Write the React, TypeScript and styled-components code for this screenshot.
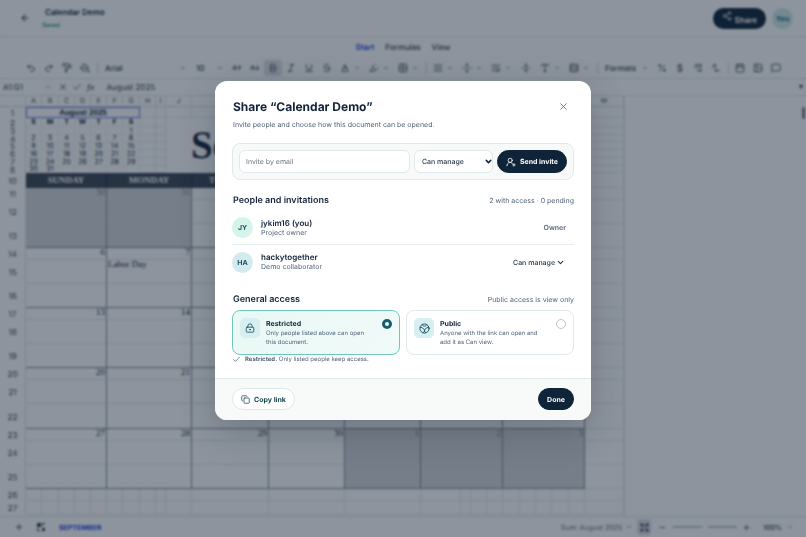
import React, { useState } from "react";
import styled, { createGlobalStyle, css } from "styled-components";
import {
  AArrowDown, AArrowUp, AlignJustify, ArrowLeft, Baseline, Bold, Calendar, Check, ChevronDown, Copy,
  DollarSign, Expand, Grid2x2, Image, Italic, LockKeyhole, MessageSquare, Minus, PaintBucket, PaintRoller,
  Percent, Plus, Redo2, Rows3, Share2, Strikethrough, Type, Underline, Undo2, UserRoundPlus, X,
  FoldVertical, WrapText, UnfoldVertical, DecimalsArrowLeft, DecimalsArrowRight, Highlighter,
} from "lucide-react";

const GlobalStyle = createGlobalStyle`
  * { box-sizing: border-box; }
  body {
    margin: 0;
    font-family: Inter, "Liberation Sans", sans-serif;
    text-rendering: geometricPrecision;
    color: #13243a;
    background: #fff;
  }
  button, input, select { font-family: inherit; color: inherit; margin: 0; text-rendering: inherit; }
  h1, h2, h3, p { margin: 0; }
`;

const Page = styled.div`
  height: 100vh;
  display: flex;
  flex-direction: column;
  overflow: hidden;
`;

/* ---------- Editor ---------- */

const TopBar = styled.header`
  display: flex;
  align-items: center;
  height: 37px;
  flex: none;
  padding: 0 13px 0 18px;
  border-bottom: 1px solid #e3e7ec;
`;
const PlainButton = styled.button<{ $w?: number; $active?: boolean }>`
  display: inline-flex;
  align-items: center;
  justify-content: center;
  flex: none;
  width: ${(p) => p.$w ?? 18}px;
  height: 16px;
  padding: 0;
  border: 0;
  border-radius: 3px;
  background: ${(p) => (p.$active ? "#dcdfe4" : "transparent")};
  color: #333b47;
`;
const DocInfo = styled.div`
  flex: 1;
  margin-left: 10px;
`;
const DocTitle = styled.h1`
  padding-top: 2px;
  padding-left: 3px;
  font-size: 8px;
  line-height: 14px;
  font-weight: 600;
`;
const Saved = styled.p`
  font-size: 6px;
  line-height: 14px;
  font-weight: 500;
  color: #0d8a80;
`;
const ShareButton = styled.button`
  display: flex;
  align-items: center;
  gap: 3px;
  height: 21px;
  padding: 0 9px;
  border: 0;
  border-radius: 11px;
  background: #0f2438;
  color: #fff;
  font-size: 8px;
  font-weight: 600;
  & > svg { margin-bottom: 4px; }
  & > span { margin-top: 4px; }
`;
const YouBadge = styled.span`
  display: grid;
  place-items: center;
  width: 21px;
  height: 21px;
  margin-left: 6px;
  border-radius: 50%;
  background: #cdebec;
  color: #17646c;
  font-size: 7px;
  font-weight: 700;
`;
const Tabs = styled.nav`
  display: flex;
  justify-content: center;
  gap: 11px;
  flex: none;
  height: 20px;
  font-size: 8px;
  line-height: 20px;
`;
const Tab = styled.a<{ $on?: boolean }>`
  text-decoration: none;
  font-weight: ${(p) => (p.$on ? 600 : 500)};
  color: ${(p) => (p.$on ? "#2447ea" : "#333b47")};
`;
const Toolbar = styled.div`
  display: flex;
  align-items: center;
  flex: none;
  height: 22px;
  padding-left: 22px;
  border-bottom: 1px solid #dfe3e8;
`;
const Caret = styled(ChevronDown)`
  flex: none;
  width: 6px;
  height: 6px;
  margin-right: 5px;
  stroke-width: 3;
  color: #555d69;
`;
const Divider = styled.span`
  flex: none;
  width: 1px;
  height: 12px;
  margin: 0 2px 0 3px;
  background: #d5d9df;
`;
const ToolSelect = styled.button<{ $w: number }>`
  display: flex;
  align-items: center;
  justify-content: space-between;
  flex: none;
  width: ${(p) => p.$w}px;
  height: 16px;
  padding: 0 0 0 5px;
  border: 0;
  background: transparent;
  font-size: 8px;
  font-weight: 500;
  color: #333b47;
`;
const FormulaBar = styled.div`
  display: flex;
  align-items: center;
  flex: none;
  height: 17px;
  padding: 0 3px;
  border-bottom: 1px solid #dfe3e8;
  font-size: 8px;
  color: #333b47;
`;
const CellName = styled.span`
  width: 42px;
`;
const Fx = styled.span`
  margin: 0 12px 0 3px;
  font-style: italic;
`;
const FormulaInput = styled.input`
  flex: 1;
  min-width: 0;
  padding: 0;
  border: 0;
  background: transparent;
  font-size: 8px;
`;
const Triangle = styled.span`
  border: 2px solid transparent;
  border-top: 4px solid #333b47;
  border-bottom: 0;
`;
const SheetArea = styled.main`
  flex: 1;
  min-height: 0;
  display: flex;
  overflow: hidden;
`;
const Filler = styled.div`
  flex: 1;
  display: flex;
  justify-content: flex-end;
  padding: 11px 1px;
  border-left: 1px solid #e3e6ea;
`;
const ScrollThumb = styled.span`
  width: 3px;
  height: 12px;
  border-radius: 2px;
  background: #7b828d;
`;
const Sheet = styled.table`
  flex: none;
  width: 624px;
  height: max-content;
  table-layout: fixed;
  border-collapse: separate;
  border-spacing: 0;
  font-size: 7px;
  line-height: 6px;
`;
const Row = styled.tr<{ $h: number }>`
  height: ${(p) => p.$h}px;
`;
const RowHead = styled.th`
  padding: 0;
  border-right: 1px solid #dfe3e8;
  font-size: 8px;
  font-weight: 400;
  color: #333b47;
`;
const ColHead = styled.th`
  padding: 0;
  border-right: 1px solid #dfe3e8;
  border-bottom: 1px solid #d5d9df;
  font-weight: 400;
  color: #444c58;
`;
const Cell = styled.td<{ $bold?: boolean }>`
  padding: 0;
  border-right: 1px solid #e3e6ea;
  border-bottom: 1px solid #e3e6ea;
  text-align: center;
  font-weight: ${(p) => (p.$bold ? 700 : 400)};
`;
const MiniCell = styled(Cell)`
  border-color: #f3f4f6;
`;
const SelectedCell = styled.td`
  padding: 0;
  border: 1px solid #5f79e6;
  text-align: center;
  font-family: "Liberation Sans", sans-serif;
  font-size: 8px;
  font-weight: 700;
`;
const MonthCell = styled.td`
  padding: 0 0 0 25px;
  text-align: left;
  vertical-align: middle;
  font-family: "Liberation Serif", serif;
  font-size: 39px;
  line-height: 39px;
  font-weight: 700;
  white-space: nowrap;
`;
const DayName = styled.th`
  padding: 0;
  border-right: 1px solid #263243;
  background: #3a4553;
  color: #fff;
  font-family: "Liberation Serif", serif;
  font-size: 9px;
  line-height: 9px;
  font-weight: 700;
`;
const DayCell = styled.td<{ $muted?: boolean; $last?: boolean; $note?: boolean }>`
  padding: 0 1px;
  border-right: 1px solid #7b828b;
  border-bottom: 1px solid ${(p) => (p.$last ? "#7b828b" : "#dfe3e8")};
  text-align: ${(p) => (p.$note ? "left" : "right")};
  vertical-align: top;
  font-family: "Liberation Serif", serif;
  font-size: 9px;
  line-height: 9px;
  ${(p) => p.$muted && css`
    background: #d2d5d9;
    color: #757b84;
    border-bottom-color: ${p.$last ? "#7b828b" : "#d2d5d9"};
  `}
`;
const BottomBar = styled.footer`
  display: flex;
  align-items: center;
  flex: none;
  height: 21px;
  padding: 0 13px 0 10px;
  border-top: 1px solid #dfe3e8;
  font-size: 7px;
  color: #333b47;
`;
const SheetTab = styled.a`
  flex: 1;
  margin-left: 5px;
  color: #2447ea;
  font-weight: 700;
  text-decoration: none;
`;
const SumLabel = styled.span`
  margin-right: 4px;
  color: #666e7a;
`;
const Zoom = styled.input`
  width: 64px;
  height: 8px;
  appearance: none;
  background: linear-gradient(#c3c8cf, #c3c8cf) center / 100% 2px no-repeat;
  &::-webkit-slider-thumb {
    appearance: none;
    width: 6px;
    height: 6px;
    border-radius: 50%;
    background: #fff;
  }
`;
const ZoomValue = styled.span`
  margin: 0 5px 0 8px;
  font-weight: 500;
`;

/* ---------- Dialog ---------- */

const Backdrop = styled.div`
  position: fixed;
  inset: 0;
  display: flex;
  justify-content: center;
  align-items: flex-start;
  padding: 81px 16px 16px;
  background: rgba(16, 32, 51, 0.48);
  backdrop-filter: blur(1px);
`;
const Dialog = styled.section`
  width: 100%;
  max-width: 376px;
  border-radius: 12px;
  overflow: hidden;
  background: #fff;
  box-shadow: 0 12px 36px rgba(15, 30, 48, 0.24);
`;
const DialogBody = styled.div`
  padding: 17px 17px 14px;
`;
const TitleRow = styled.div`
  display: flex;
  align-items: center;
  justify-content: space-between;
  padding-right: 2px;
`;
const Title = styled.h2`
  padding-left: 1px;
  font-size: 12px;
  line-height: 17px;
  font-weight: 700;
`;
const Subtitle = styled.p`
  margin-top: 4px;
  padding-left: 1px;
  font-size: 7px;
  line-height: 12px;
  color: #53647a;
`;
const InviteForm = styled.form`
  display: flex;
  gap: 4px;
  margin-top: 12px;
  padding: 6px;
  border: 1px solid #e0e9ea;
  border-radius: 8px;
  background: #f7faf9;
`;
const EmailInput = styled.input`
  flex: 1;
  min-width: 0;
  height: 23px;
  padding: 0 6px;
  border: 1px solid #dfe8ea;
  border-radius: 6px;
  background: #fff;
  font-size: 7px;
  &::placeholder { color: #6f7680; opacity: 1; }
`;
const SelectWrap = styled.span<{ $w: number; $inset?: boolean }>`
  display: grid;
  align-items: center;
  width: ${(p) => p.$w}px;
  margin-right: ${(p) => (p.$inset ? 9 : 0)}px;
  & > * { grid-area: 1 / 1; }
  & > svg { justify-self: end; pointer-events: none; }
`;
const RoleSelect = styled.select<{ $boxed?: boolean }>`
  width: 100%;
  height: 23px;
  padding: 0 7px;
  appearance: none;
  border: 1px solid ${(p) => (p.$boxed ? "#dfe8ea" : "transparent")};
  border-radius: 6px;
  background: ${(p) => (p.$boxed ? "#fff" : "transparent")};
  font-size: 7px;
  font-weight: 500;
  color: #26374b;
`;
const Pill = styled.button<{ $small?: boolean; $light?: boolean }>`
  display: inline-flex;
  align-items: center;
  justify-content: center;
  gap: 4px;
  flex: none;
  height: ${(p) => (p.$small ? 22 : 23)}px;
  padding: 0 8px;
  border: 1px solid ${(p) => (p.$light ? "#dde8ea" : "#0f2438")};
  border-radius: 12px;
  background: ${(p) => (p.$light ? "#fff" : "#0f2438")};
  color: ${(p) => (p.$light ? "#164850" : "#fff")};
  font-size: 7px;
  font-weight: 700;
  white-space: nowrap;
`;
const SectionHead = styled.div`
  display: flex;
  align-items: center;
  justify-content: space-between;
  margin: 14px 0 3px;
  padding-left: 1px;
  line-height: 14px;
`;
const SectionTitle = styled.h3`
  font-size: 9px;
  font-weight: 600;
`;
const SectionNote = styled.span`
  font-size: 7px;
  color: #53647a;
`;
const People = styled.ul`
  margin: 0;
  padding: 0;
  list-style: none;
`;
const Person = styled.li`
  display: flex;
  align-items: center;
  gap: 8px;
  height: 34px;
  border-bottom: 1px solid #e7edef;
  &:last-child { border-bottom: 0; }
`;
const Avatar = styled.span<{ $bg: string }>`
  display: grid;
  place-items: center;
  width: 21px;
  height: 21px;
  border-radius: 50%;
  background: ${(p) => p.$bg};
  color: #17525c;
  font-size: 7px;
  font-weight: 700;
`;
const PersonText = styled.div`
  flex: 1;
  font-size: 7px;
  line-height: 10px;
  color: #53647a;
  & > strong { display: block; font-size: 8px; font-weight: 600; color: #13243a; }
`;
const Owner = styled.span`
  margin-right: 8px;
  font-size: 7px;
  font-weight: 600;
  color: #53647a;
`;
const Cards = styled.div`
  display: grid;
  grid-template-columns: 1fr 1fr;
  gap: 6px;
`;
const Card = styled.label<{ $on: boolean }>`
  display: flex;
  align-items: flex-start;
  gap: 6px;
  padding: 7px;
  border: 1px solid ${(p) => (p.$on ? "#6ec9b8" : "#e0e9ea")};
  border-radius: 8px;
  background: ${(p) => (p.$on ? "linear-gradient(135deg, #e9f9f5, #f1faf9)" : "#fff")};
`;
const Tile = styled.span`
  display: grid;
  place-items: center;
  flex: none;
  width: 20px;
  height: 20px;
  border-radius: 5px;
  background: #d7eff0;
  color: #17525c;
`;
const CardText = styled.span`
  flex: 1;
  padding-right: 8px;
  font-size: 6px;
  line-height: 9px;
  color: #53647a;
  & > strong { display: block; font-size: 7px; line-height: 11px; color: #13243a; }
`;
const Radio = styled.input`
  appearance: none;
  flex: none;
  width: 10px;
  height: 10px;
  margin: 1px 0 0;
  border: 1px solid #bcc6d0;
  border-radius: 50%;
  background: #fff;
  &:checked { border: 3px solid #11606c; }
`;
const StatusLine = styled.p`
  display: flex;
  align-items: center;
  gap: 4px;
  font-size: 6px;
  line-height: 9px;
  color: #53647a;
`;
const DialogFooter = styled.footer`
  display: flex;
  justify-content: space-between;
  padding: 9px 17px 10px;
  border-top: 1px solid #e3eaec;
  background: #f8faf9;
`;

const PublicIcon = () => (
  <svg width="11" height="11" viewBox="0 0 24 24" fill="none" stroke="currentColor" strokeWidth="2" strokeLinecap="round" strokeLinejoin="round" aria-hidden="true">
    <circle cx="12" cy="12" r="10" />
    <path d="M7 4c1 4 9 4 10 0M2.500 10c3-1 5.500 0 6.500 2.500l3 2.500 3-2.500c1-2.500 3.500-3.500 6.500-2.500M12 15v3l-3 3M12 18l3 3" />
  </svg>
);
const ViewsIcon = () => (
  <svg width="10" height="10" viewBox="0 0 10 10" fill="currentColor" aria-hidden="true">
    <path d="M1 1h4v4H1zM6 6h3v3H6zM6 1h3v1H7v2H6zM1 6h1v2h2v1H1z" />
  </svg>
);

type Tool = { icon: React.ElementType; label: string; caret?: boolean; active?: boolean; w?: number };
const history: Tool[] = [
  { icon: Undo2, label: "Undo" },
  { icon: Redo2, label: "Redo" },
  { icon: PaintRoller, label: "Copy format" },
  { icon: PaintBucket, label: "Clear format" },
];
const textTools: Tool[] = [
  { icon: AArrowUp, label: "Larger text" },
  { icon: AArrowDown, label: "Smaller text" },
  { icon: Bold, label: "Bold", active: true },
  { icon: Italic, label: "Italic" },
  { icon: Underline, label: "Underline" },
  { icon: Strikethrough, label: "Strikethrough" },
  { icon: Baseline, label: "Text colour", caret: true },
  { icon: Highlighter, label: "Fill colour", caret: true },
  { icon: Grid2x2, label: "Borders", caret: true },
];
const alignTools: Tool[] = [
  { icon: AlignJustify, label: "Align", caret: true },
  { icon: UnfoldVertical, label: "Vertical align", caret: true },
  { icon: WrapText, label: "Wrap", caret: true },
  { icon: FoldVertical, label: "Merge", w: 20 },
  { icon: Type, label: "Rotate", caret: true },
  { icon: Rows3, label: "Rows", caret: true },
];
const numberTools: Tool[] = [
  { icon: Percent, label: "Percent" },
  { icon: DollarSign, label: "Currency" },
  { icon: DecimalsArrowRight, label: "More decimals" },
  { icon: DecimalsArrowLeft, label: "Fewer decimals" },
];
const insertTools: Tool[] = [
  { icon: Calendar, label: "Insert date" },
  { icon: Image, label: "Insert image" },
  { icon: MessageSquare, label: "Comment" },
];

const Tools = ({ items }: { items: Tool[] }) => (
  <>
    {items.map(({ icon: Icon, label, caret, active, w }) => (
      <React.Fragment key={label}>
        <PlainButton aria-label={label} $active={active} $w={w}>
          <Icon size={10} strokeWidth={2} />
        </PlainButton>
        {caret && <Caret />}
      </React.Fragment>
    ))}
  </>
);

const colWidths = [26, 16, 17, 16, 16, 16, 16, 17, 16, 10, 26, 77, 76, 76, 40, 10, 16, 16, 17, 16, 16, 17, 16, 39];
const letters = ["A", "B", "C", "D", "E", "F", "G", "H", "I", "J", "K", "L", "M", "N", "O", "P", "Q", "R", "S", "T", "U", "V", "W"];
const spans = [5, 5, 1, 1, 1, 4, 5];
const mini: { h: number; days: string[] }[] = [
  { h: 9, days: ["S", "M", "T", "W", "T", "F", "S"] },
  { h: 8, days: ["", "", "", "", "", "", "1"] },
  { h: 7, days: ["2", "3", "4", "5", "6", "7", "8"] },
  { h: 8, days: ["9", "10", "11", "12", "13", "14", "15"] },
  { h: 8, days: ["16", "17", "18", "19", "20", "21", "22"] },
  { h: 8, days: ["23", "24", "25", "26", "27", "28", "29"] },
  { h: 7, days: ["30", "31", "", "", "", "", ""] },
];
const dayNames = ["SUNDAY", "MONDAY", "TUESDAY", "WEDNESDAY", "THURSDAY", "FRIDAY", "SATURDAY"];
const weeks: number[][] = [
  [30, 31, 1, 2, 3, 4, 5],
  [6, 7, 8, 9, 10, 11, 12],
  [13, 14, 15, 16, 17, 18, 19],
  [20, 21, 22, 23, 24, 25, 26],
  [27, 28, 29, 30, 1, 2, 3],
];
const isMuted = (week: number, day: number) => (week === 0 && day > 20) || (week === 4 && day < 10);

const CalendarSheet = () => (
  <Sheet>
    <colgroup>{colWidths.map((w, i) => <col key={i} width={w} />)}</colgroup>
    <thead>
      <Row $h={11}>
        <ColHead />
        {letters.map((l) => <ColHead key={l}>{l}</ColHead>)}
      </Row>
    </thead>
    <tbody>
      <Row $h={11}>
        <RowHead>1</RowHead>
        <SelectedCell colSpan={7}>August 2025</SelectedCell>
        <Cell /><Cell /><Cell />
        <Cell colSpan={12} />
        <Cell />
      </Row>
      {mini.map((row, r) => (
        <Row key={r} $h={row.h}>
          <RowHead>{r + 2}</RowHead>
          {row.days.map((d, i) => <MiniCell key={i} $bold={r === 0}>{d}</MiniCell>)}
          <Cell /><Cell />
          {r === 0 && <MonthCell colSpan={13} rowSpan={7}>September</MonthCell>}
          <Cell />
        </Row>
      ))}
      <Row $h={15}>
        <RowHead>10</RowHead>
        {dayNames.map((n, i) => <DayName key={n} colSpan={spans[i]}>{n}</DayName>)}
        <Cell />
      </Row>
      {weeks.map((week, w) =>
        [0, 1, 2].map((part) => (
          <Row key={`${w}-${part}`} $h={part === 0 ? 12 : part === 2 && w === 3 ? 25 : 24}>
            <RowHead>{11 + w * 3 + part}</RowHead>
            {week.map((day, i) => {
              const note = w === 1 && i === 1 && part === 1;
              return (
                <DayCell key={i} colSpan={spans[i]} $muted={isMuted(w, day)} $last={part === 2} $note={note}>
                  {part === 0 ? day : note ? "Labor Day" : null}
                </DayCell>
              );
            })}
            <Cell />
          </Row>
        )),
      )}
      {[26, 27].map((n) => (
        <Row key={n} $h={n === 26 ? 12 : 14}>
          <RowHead>{n}</RowHead>
          {letters.map((l) => <Cell key={l} />)}
        </Row>
      ))}
    </tbody>
  </Sheet>
);

const Editor = () => (
  <>
    <TopBar>
      <PlainButton aria-label="Back" $w={14}><ArrowLeft size={10} strokeWidth={2.5} /></PlainButton>
      <DocInfo>
        <DocTitle>Calendar Demo</DocTitle>
        <Saved>Saved</Saved>
      </DocInfo>
      <ShareButton><Share2 size={10} /><span>Share</span></ShareButton>
      <YouBadge>You</YouBadge>
    </TopBar>
    <Tabs>
      <Tab href="#start" $on>Start</Tab>
      <Tab href="#formulas">Formulas</Tab>
      <Tab href="#view">View</Tab>
    </Tabs>
    <Toolbar>
      <Tools items={history} />
      <Divider />
      <ToolSelect $w={91}>Arial<Caret /></ToolSelect>
      <ToolSelect $w={37}>10<Caret /></ToolSelect>
      <Tools items={textTools} />
      <Divider />
      <Tools items={alignTools} />
      <Divider />
      <ToolSelect $w={53}>Formats<Caret /></ToolSelect>
      <Tools items={numberTools} />
      <Divider />
      <Tools items={insertTools} />
    </Toolbar>
    <FormulaBar>
      <CellName>A1:G1</CellName>
      <Caret />
      <PlainButton aria-label="Cancel" $w={14}><X size={10} /></PlainButton>
      <PlainButton aria-label="Accept" $w={14}><Check size={10} /></PlainButton>
      <Fx>ƒx</Fx>
      <FormulaInput aria-label="Formula" defaultValue="August 2025" />
      <Triangle />
    </FormulaBar>
    <SheetArea>
      <CalendarSheet />
      <Filler><ScrollThumb /></Filler>
    </SheetArea>
    <BottomBar>
      <PlainButton aria-label="Add sheet"><Plus size={10} /></PlainButton>
      <PlainButton aria-label="All sheets" $w={26}><ViewsIcon /></PlainButton>
      <SheetTab href="#september">SEPTEMBER</SheetTab>
      <SumLabel>Sum: August 2025</SumLabel>
      <Caret />
      <PlainButton aria-label="Fit" $active $w={14}><Expand size={9} strokeWidth={3} /></PlainButton>
      <PlainButton aria-label="Zoom out" $w={22}><Minus size={9} /></PlainButton>
      <Zoom type="range" aria-label="Zoom" defaultValue={50} />
      <PlainButton aria-label="Zoom in"><Plus size={9} /></PlainButton>
      <ZoomValue>100%</ZoomValue>
      <ChevronDown size={6} />
    </BottomBar>
  </>
);

const RoleOptions = () => (
  <>
    <option>Can manage</option>
    <option>Can edit</option>
    <option>Can view</option>
  </>
);

const ShareDialog = () => {
  const [access, setAccess] = useState("restricted");
  return (
    <Dialog role="dialog" aria-modal="true" aria-labelledby="share-title">
      <DialogBody>
        <TitleRow>
          <Title id="share-title">Share “Calendar Demo”</Title>
          <PlainButton aria-label="Close"><X size={11} strokeWidth={2} color="#6b7480" /></PlainButton>
        </TitleRow>
        <Subtitle>Invite people and choose how this document can be opened.</Subtitle>
        <InviteForm onSubmit={(e) => e.preventDefault()}>
          <EmailInput type="email" placeholder="Invite by email" aria-label="Invite by email" />
          <SelectWrap $w={79}>
            <RoleSelect $boxed aria-label="Role for invite"><RoleOptions /></RoleSelect>
            <ChevronDown size={9} strokeWidth={4} color="#13243a" />
          </SelectWrap>
          <Pill type="submit"><UserRoundPlus size={10} />Send invite</Pill>
        </InviteForm>

        <SectionHead>
          <SectionTitle>People and invitations</SectionTitle>
          <SectionNote>2 with access · 0 pending</SectionNote>
        </SectionHead>
        <People>
          <Person>
            <Avatar $bg="#d5f5ec">JY</Avatar>
            <PersonText><strong>jykim16 (you)</strong>Project owner</PersonText>
            <Owner>Owner</Owner>
          </Person>
          <Person>
            <Avatar $bg="#d3ebee">HA</Avatar>
            <PersonText><strong>hackytogether</strong>Demo collaborator</PersonText>
            <SelectWrap $w={60} $inset>
              <RoleSelect aria-label="Role for hackytogether"><RoleOptions /></RoleSelect>
              <ChevronDown size={9} strokeWidth={3} color="#26374b" />
            </SelectWrap>
          </Person>
        </People>

        <SectionHead>
          <SectionTitle>General access</SectionTitle>
          <SectionNote>Public access is view only</SectionNote>
        </SectionHead>
        <Cards>
          <Card $on={access === "restricted"}>
            <Tile><LockKeyhole size={10} /></Tile>
            <CardText><strong>Restricted</strong>Only people listed above can open this document.</CardText>
            <Radio type="radio" name="access" checked={access === "restricted"} onChange={() => setAccess("restricted")} />
          </Card>
          <Card $on={access === "public"}>
            <Tile><PublicIcon /></Tile>
            <CardText><strong>Public</strong>Anyone with the link can open and add it as Can view.</CardText>
            <Radio type="radio" name="access" checked={access === "public"} onChange={() => setAccess("public")} />
          </Card>
        </Cards>
        <StatusLine>
          <Check size={9} />
          <span><strong>Restricted.</strong> Only listed people keep access.</span>
        </StatusLine>
      </DialogBody>
      <DialogFooter>
        <Pill type="button" $small $light><Copy size={9} />Copy link</Pill>
        <Pill type="button" $small>Done</Pill>
      </DialogFooter>
    </Dialog>
  );
};

export default function App() {
  return (
    <>
      <GlobalStyle />
      <Page><Editor /></Page>
      <Backdrop><ShareDialog /></Backdrop>
    </>
  );
}
